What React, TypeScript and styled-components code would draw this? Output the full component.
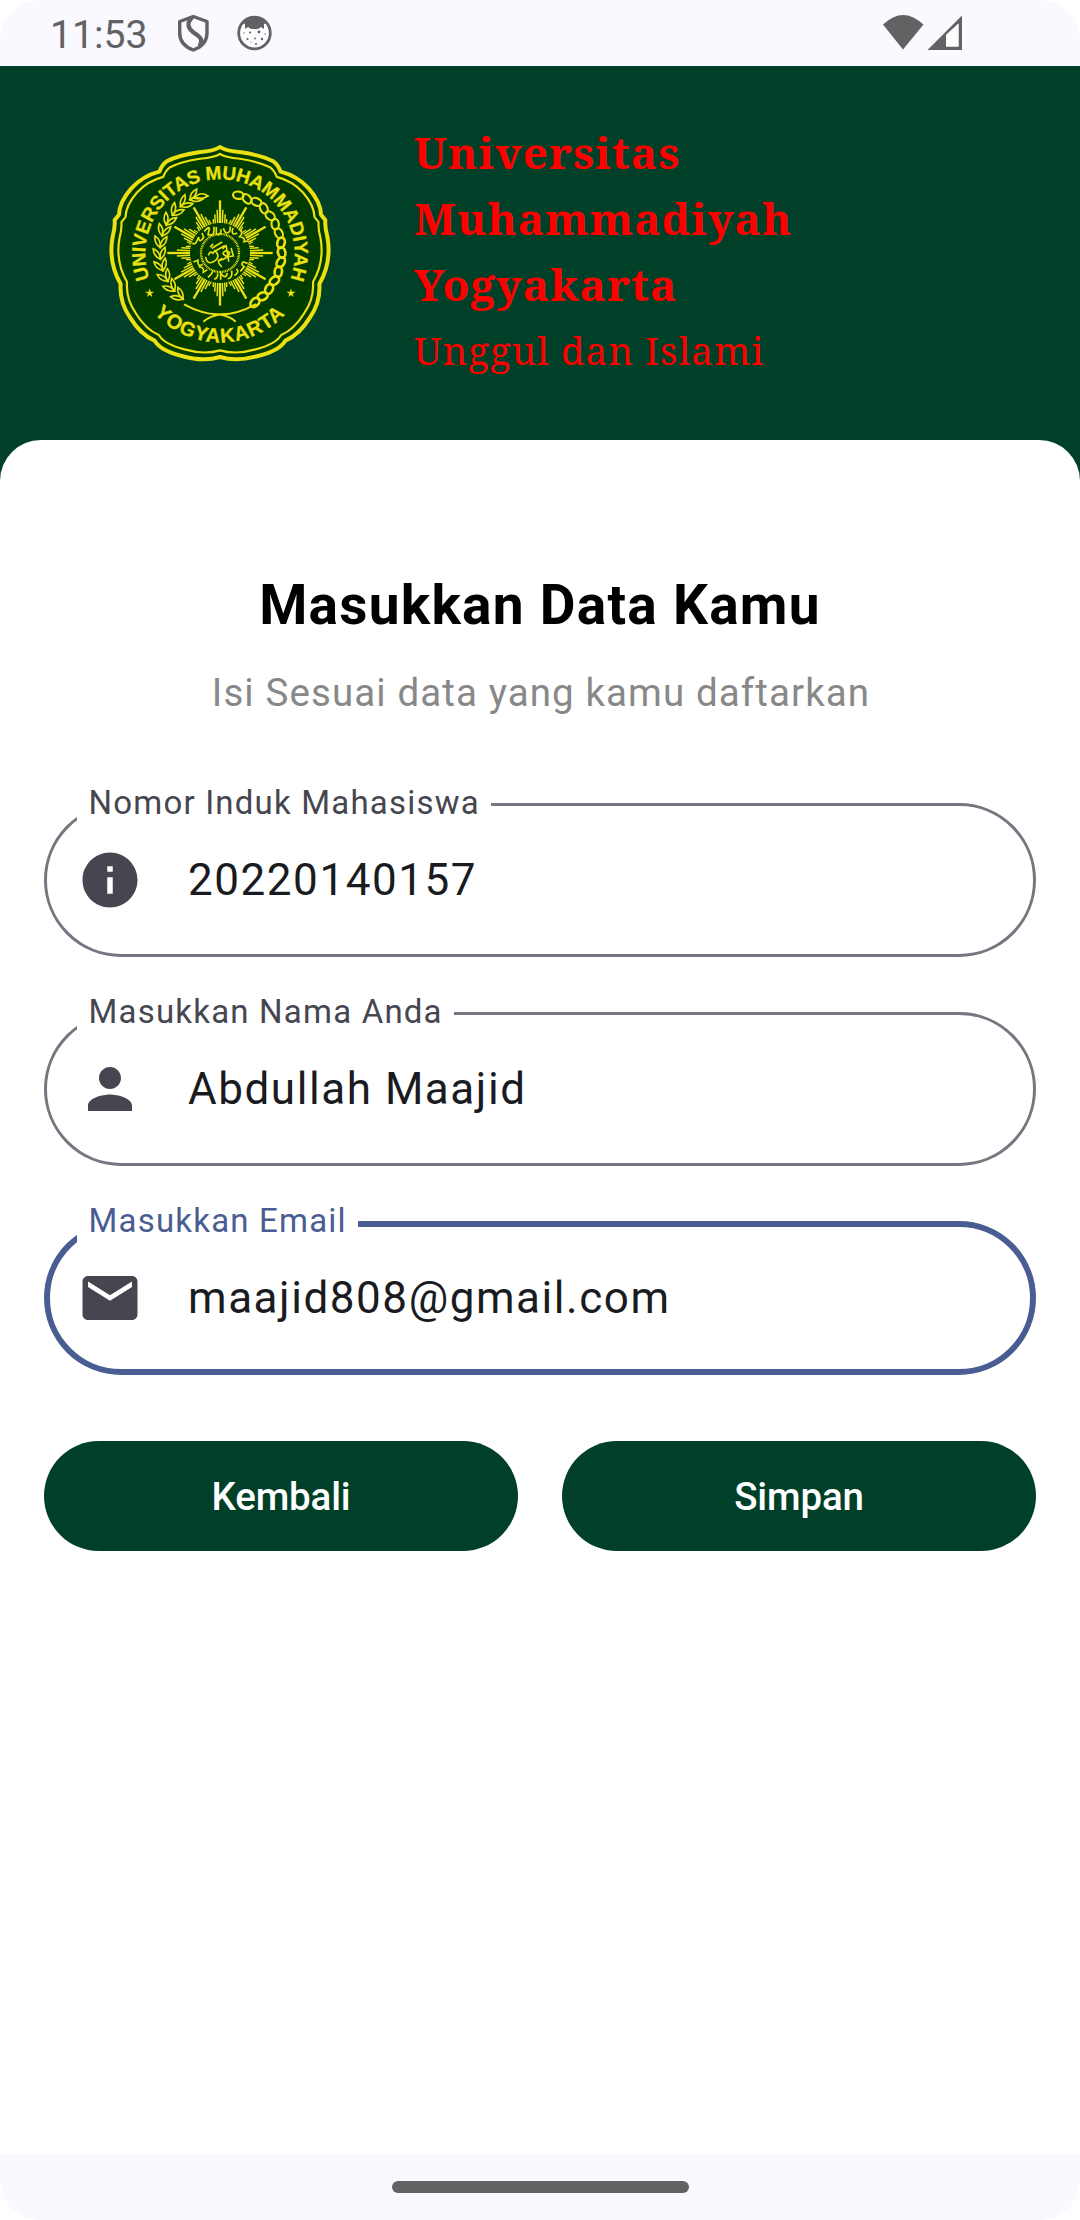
import React from "react";
import styled, { createGlobalStyle } from "styled-components";

const GREEN = "#004029";
const YELLOW = "#ebe010";
const SYSTEM = "#626264";

const GlobalStyle = createGlobalStyle`
  body { margin: 0; background: #fff; }
  * { box-sizing: border-box; }
`;

const Screen = styled.div`
  width: 1080px;
  height: 2220px;
  display: flex;
  flex-direction: column;
  background: #fff;
  font-family: Roboto, sans-serif;
  overflow: hidden;
`;

const StatusBar = styled.header`
  height: 66px;
  flex: none;
  display: flex;
  align-items: flex-start;
  padding: 0 117px 0 50px;
  background: #f9f9ff;
  border-radius: 40px 40px 0 0;
`;

const Clock = styled.span`
  width: 126px;
  font-size: 39.2px;
  line-height: 70px;
  color: ${SYSTEM};
`;

const StatusIcon = styled.svg<{ $w: number; $h: number; $ml?: string }>`
  width: ${(p) => p.$w}px;
  height: ${(p) => p.$h}px;
  margin-top: 14px;
  margin-left: ${(p) => p.$ml ?? "0"};
  flex: none;
`;

const Body = styled.main`
  flex: 1;
  display: flex;
  flex-direction: column;
  background: ${GREEN};
`;

const Banner = styled.section`
  height: 374px;
  display: flex;
  padding: 53px 0 0 100px;
`;

const Emblem = styled.svg`
  width: 240px;
  height: 240px;
  margin-top: 11px;
  flex: none;
`;

const Motto = styled.div`
  display: flex;
  flex-direction: column;
  margin-left: 74px;
  color: #ff0000;
  font-family: "Noto Serif", "DejaVu Serif Condensed", "DejaVu Serif", serif;
`;

const MottoLine = styled.span<{ $bold?: boolean }>`
  font-size: ${(p) => (p.$bold ? 44 : 38.5)}px;
  font-weight: ${(p) => (p.$bold ? 700 : 400)};
  letter-spacing: ${(p) => (p.$bold ? 1.08 : 0.96)}px;
  line-height: 66px;
  white-space: nowrap;
`;

const Card = styled.section`
  flex: 1;
  display: flex;
  flex-direction: column;
  padding: 132px 44px 0;
  background: #fff;
  border-radius: 41px 41px 0 0;
`;

const Title = styled.h1`
  margin: 0;
  font-size: 55px;
  font-weight: 700;
  line-height: 66px;
  letter-spacing: 1.25px;
  text-align: center;
  color: #000;
`;

const Subtitle = styled.p`
  margin: 22px 0 77px;
  padding-left: 2px;
  font-size: 38.5px;
  line-height: 66px;
  letter-spacing: 1.1px;
  text-align: center;
  color: #888;
`;

const Fields = styled.div`
  display: flex;
  flex-direction: column;
  gap: 55px;
`;

const Field = styled.div<{ $focus?: boolean }>`
  position: relative;
  height: 154px;
  display: flex;
  align-items: center;
  padding-left: ${(p) => (p.$focus ? 27 : 30)}px;
  border: ${(p) => (p.$focus ? "6px solid #495d92" : "3px solid #757680")};
  border-radius: 77px;
`;

const FieldLabel = styled.label<{ $focus?: boolean }>`
  position: absolute;
  left: ${(p) => (p.$focus ? 27 : 30)}px;
  top: ${(p) => (p.$focus ? -28 : -25)}px;
  padding: 0 11.5px;
  background: #fff;
  font-size: 33px;
  line-height: 44px;
  letter-spacing: 1.2px;
  white-space: nowrap;
  color: ${(p) => (p.$focus ? "#495d92" : "#45464f")};
`;

const FieldIcon = styled.svg`
  width: 66px;
  height: 66px;
  fill: #45464f;
`;

const FieldValue = styled.span`
  margin-left: 45px;
  font-size: 44px;
  line-height: 66px;
  letter-spacing: 1.55px;
  color: #1a1b21;
`;

const Actions = styled.div`
  display: grid;
  grid-template-columns: 1fr 1fr;
  gap: 44px;
  margin-top: 66px;
`;

const Action = styled.button`
  height: 110px;
  border: 0;
  padding: 0;
  border-radius: 55px;
  background: ${GREEN};
  color: #fff;
  font-family: Roboto, sans-serif;
  font-size: 38.5px;
  font-weight: 500;
  letter-spacing: -0.15px;
`;

const NavBar = styled.footer`
  height: 66px;
  flex: none;
  display: flex;
  justify-content: center;
  padding-top: 27px;
  background: #f9f9ff;
  border-radius: 0 0 40px 40px;
`;

const NavHandle = styled.div`
  width: 297px;
  height: 12px;
  border-radius: 6px;
  background: ${SYSTEM};
`;

const polar = (r: number, deg: number, cy = 369): [number, number] => {
  const a = (deg * Math.PI) / 180;
  return [360 + r * Math.sin(a), cy - r * Math.cos(a)];
};

const range = (n: number) => Array.from({ length: n }, (_, i) => i);

const RAYS: [number, number, number][] = [
  [0, 158, 7],
  [4.5, 130, 4.5],
  [-4.5, 130, 4.5],
  [9, 117, 4.5],
  [-9, 117, 4.5],
  [13, 104, 4],
  [-13, 104, 4],
];

const Sun = () => (
  <g stroke={YELLOW}>
    {range(12).flatMap((i) =>
      RAYS.map(([off, len, w], k) => {
        const [x1, y1] = polar(90, i * 30 + off);
        const [x2, y2] = polar(len, i * 30 + off * 0.85);
        return <line key={`${i}-${k}`} x1={x1} y1={y1} x2={x2} y2={y2} strokeWidth={w} />;
      })
    )}
  </g>
);

const Wheat = () => (
  <g fill="none" stroke={YELLOW} strokeWidth="5">
    {range(11).map((i) => {
      const deg = -30 - i * 11.2;
      const [x, y] = polar(180, deg, 365);
      return (
        <g key={i} transform={`translate(${x} ${y}) rotate(${deg + 90})`}>
          <path transform="rotate(-28)" d="M0 0 Q12-20 0-38 Q-12-20 0 0Z" />
          <path transform="rotate(28)" d="M0 0 Q12-20 0-38 Q-12-20 0 0Z" />
        </g>
      );
    })}
    <path d="M324 198 Q302 182 282 204 Q300 212 324 198Z" />
  </g>
);

const Chain = () => (
  <g fill="none" stroke={YELLOW}>
    {range(15).map((i) => {
      const deg = 18 + i * 9.1;
      const [x, y] = polar(i < 2 ? 178 : 185, deg, 365);
      return (
        <ellipse
          key={i}
          cx={x}
          cy={y}
          rx="16"
          ry="11"
          strokeWidth={i > 6 ? 8 : 6.5}
          transform={`rotate(${deg + (i % 2 ? 22 : -12)} ${x} ${y})`}
        />
      );
    })}
  </g>
);

const outline =
  "M360 51 Q346 62 296 67 Q236 76 200 94 Q186 104 178 125 Q128 138 94 175 Q58 216 57 254 L44 270 Q46 290 38 320 Q24 396 62 462 Q58 516 90 562 Q122 614 164 632 Q182 662 246 678 Q310 696 360 681 Q410 696 474 678 Q538 662 556 632 Q598 614 630 562 Q662 516 658 462 Q696 396 682 320 Q674 290 676 270 L663 254 Q662 216 626 175 Q592 138 542 125 Q534 104 520 94 Q484 76 424 67 Q374 62 360 51 Z";

const Star = ({ x, y }: { x: number; y: number }) => (
  <path
    transform={`translate(${x} ${y})`}
    fill={YELLOW}
    d="M0-14 3-4 14-4 5 2 8 12 0 6-8 12-5 2-14-4-3-4Z"
  />
);

const UniversityEmblem = () => (
  <Emblem viewBox="0 0 720 720">
    <defs>
      <path id="arcTop" d="M149 447 A224 224 0 1 1 571 447" />
      <path id="arcBottom" d="M162 550 A268 268 0 0 0 558 550" />
    </defs>
    <path d={outline} fill="#003b00" stroke={YELLOW} strokeWidth="12" strokeLinejoin="round" />
    <path
      d={outline}
      fill="none"
      stroke={YELLOW}
      strokeWidth="7"
      strokeLinejoin="round"
      transform="translate(360 369) scale(.936) translate(-360 -369)"
    />
    <g
      fill={YELLOW}
      stroke={YELLOW}
      strokeWidth="0.8"
      fontFamily="Liberation Sans, Arial, sans-serif"
      fontSize="57"
      fontWeight="700"
    >
      <text>
        <textPath href="#arcTop" textLength="858" lengthAdjust="spacing">UNIVERSITAS MUHAMMADIYAH</textPath>
      </text>
      <text fontSize="60">
        <textPath href="#arcBottom" textLength="441" lengthAdjust="spacing">YOGYAKARTA</textPath>
      </text>
    </g>
    <Star x={149} y={489} />
    <Star x={573} y={489} />
    <Wheat />
    <Chain />
    <path
      d="M252 523 Q306 552 352 553 Q386 556 407 575 M468 522 Q414 552 364 553 Q330 558 310 575"
      fill="none"
      stroke={YELLOW}
      strokeWidth="6"
    />
    <Sun />
    <g fill="none" stroke={YELLOW}>
      <circle cx="360" cy="369" r="57" strokeWidth="7" strokeDasharray="3 2" />
      <path
        d="M277 339 q7 6 12-3 l7-15 q1 22 15 1 l-5-13 m7-5 q15-17 15-8 l-4 18 q18 5 18-12 v-12 m7 1 v22 q15 5 14-15 m7-3 q8 24 20 7 l1-13 m8 5 q-8 25 13 15 m4-12 q17 10 3 23 q18 3 13 15 l13-2 M280 396 l14-5 q-2 22 14 12 m-12 8 q17-1 14 16 l12-8 m2 23 q15-13 15-21 m3 26 q12-1 11-17 m9 19 v-20 q15 22 20 0 m1 17 q15 0 12-24 m8 15 q17-12 6-20 m12 7 l12-14 q-13-7-3-14 l13 4"
        strokeWidth="5"
      />
      <path
        d="M317 383 q4 22 23 12 q18-9 12-24 l-8-10 M326 374 q5-13 13-4 m-2-16 l28-17 m-24 29 l31-18 M355 391 q27-2 34-23 q-13-12-20 2 q7 13 31 8 l-6-22 M364 409 q-17-15 1-23 M379 350 l7 43 M332 350 l6-7 M369 355 l9-9"
        strokeWidth="5"
        strokeLinecap="round"
      />
    </g>
  </Emblem>
);

const App = () => (
  <>
    <GlobalStyle />
    <Screen>
      <StatusBar>
        <Clock>11:53</Clock>
        <StatusIcon $w={34} $h={39} viewBox="0 0 34 39">
          <g fill="none" stroke={SYSTEM} strokeWidth="3.400" strokeLinejoin="round">
            <path d="M17.3 2.5 31 7.5V19c0 8-5.500 14-13.700 17C9 33 3.700 27 3.700 19V7.500Z" />
            <path d="M16.500 3c-6 6-5 11 1 15.500C24 23 27.500 25 23.500 32" strokeWidth="4.200" />
          </g>
        </StatusIcon>
        <StatusIcon $w={36} $h={37} $ml="27px" viewBox="0 0 36 37">
          <circle cx="17.500" cy="19" r="15.800" fill="#fdfdff" stroke={SYSTEM} strokeWidth="2.800" />
          <path d="M5 9C12 1 23 1 30 9l-3 1v5l-3-2-3 2H14l-3-2-3 2v-5Z" fill={SYSTEM} />
          <g fill={SYSTEM}>
            <circle cx="13" cy="18.500" r="1.100" />
            <circle cx="22" cy="18" r="1.400" />
            <circle cx="10.500" cy="25" r="1.100" />
            <circle cx="18" cy="24.500" r=".9" />
            <circle cx="25" cy="25" r="1.200" />
            <circle cx="19" cy="30" r="1" />
            <circle cx="7" cy="19" r=".7" />
            <circle cx="28" cy="20" r=".7" />
            <circle cx="14" cy="28" r=".6" />
          </g>
        </StatusIcon>
        <StatusIcon $w={42} $h={36} $ml="auto" viewBox="0 0 42 36">
          <path d="M1 10.500Q21-8.500 41.500 10.500L21 35.500Z" fill={SYSTEM} />
        </StatusIcon>
        <StatusIcon $w={36} $h={37} $ml="3px" viewBox="0 0 36 37">
          <path d="M.5 36 35 1.500V36ZM19 21V32.500H31.500V9.500Z" fill={SYSTEM} fillRule="evenodd" />
          <path d="M19 21V32.500H31.500V9.500Z" fill="#fdfdff" />
        </StatusIcon>
      </StatusBar>

      <Body>
        <Banner>
          <UniversityEmblem />
          <Motto>
            <MottoLine $bold>Universitas</MottoLine>
            <MottoLine $bold>Muhammadiyah</MottoLine>
            <MottoLine $bold>Yogyakarta</MottoLine>
            <MottoLine>Unggul dan Islami</MottoLine>
          </Motto>
        </Banner>

        <Card>
          <Title>Masukkan Data Kamu</Title>
          <Subtitle>Isi Sesuai data yang kamu daftarkan</Subtitle>
          <Fields>
            <Field>
              <FieldLabel>Nomor Induk Mahasiswa</FieldLabel>
              <FieldIcon viewBox="0 0 24 24">
                <path d="M12 2C6.480 2 2 6.480 2 12s4.480 10 10 10 10-4.480 10-10S17.520 2 12 2zm1 15h-2v-6h2v6zm0-8h-2V7h2v2z" />
              </FieldIcon>
              <FieldValue>20220140157</FieldValue>
            </Field>
            <Field>
              <FieldLabel>Masukkan Nama Anda</FieldLabel>
              <FieldIcon viewBox="0 0 24 24">
                <path d="M12 12c2.210 0 4-1.790 4-4s-1.790-4-4-4-4 1.790-4 4 1.790 4 4 4zm0 2c-2.670 0-8 1.340-8 4v2h16v-2c0-2.660-5.330-4-8-4z" />
              </FieldIcon>
              <FieldValue>Abdullah Maajid</FieldValue>
            </Field>
            <Field $focus>
              <FieldLabel $focus>Masukkan Email</FieldLabel>
              <FieldIcon viewBox="0 0 24 24">
                <path d="M20 4H4c-1.100 0-1.990.9-1.990 2L2 18c0 1.100.9 2 2 2h16c1.100 0 2-.9 2-2V6c0-1.100-.9-2-2-2zm0 4l-8 5-8-5V6l8 5 8-5v2z" />
              </FieldIcon>
              <FieldValue>maajid808@gmail.com</FieldValue>
            </Field>
          </Fields>
          <Actions>
            <Action>Kembali</Action>
            <Action>Simpan</Action>
          </Actions>
        </Card>
      </Body>

      <NavBar>
        <NavHandle />
      </NavBar>
    </Screen>
  </>
);

export default App;
